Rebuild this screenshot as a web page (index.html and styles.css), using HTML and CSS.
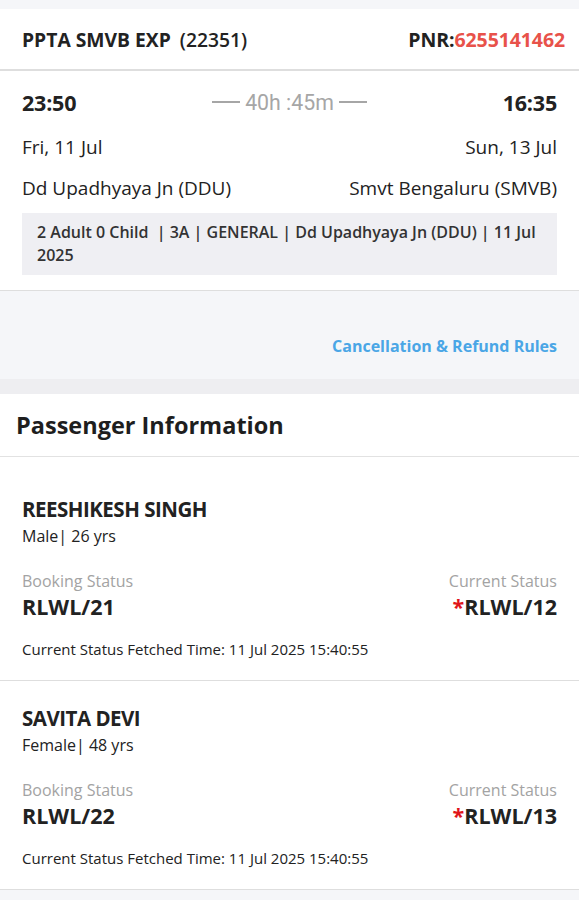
FILE: index.html
```html
<!DOCTYPE html>
<html>
<head>
<meta charset="utf-8">
<link rel="stylesheet" href="styles.css">
</head>
<body>
<div class="page">
  <div class="top-band"></div>
  <header class="train-head">
    <div class="train-name">PPTA SMVB EXP <span class="train-no">(22351)</span></div>
    <div class="pnr">PNR:<span class="pnr-no">6255141462</span></div>
  </header>
  <section class="journey">
    <div class="row times">
      <span class="time">23:50</span>
      <span class="duration"><span class="dash"></span>40h :45m<span class="dash"></span></span>
      <span class="time">16:35</span>
    </div>
    <div class="row dates">
      <span>Fri, 11 Jul</span>
      <span>Sun, 13 Jul</span>
    </div>
    <div class="row stations">
      <span>Dd Upadhyaya Jn (DDU)</span>
      <span>Smvt Bengaluru (SMVB)</span>
    </div>
    <div class="summary">2 Adult 0 Child &nbsp;| 3A | GENERAL | Dd Upadhyaya Jn (DDU) | 11 Jul 2025</div>
  </section>
  <section class="rules">
    <a class="rules-link">Cancellation &amp; Refund Rules</a>
  </section>
  <div class="gap-band"></div>
  <section class="passengers">
    <h2 class="pass-title">Passenger Information</h2>
    <div class="pass">
      <div class="pass-name">REESHIKESH SINGH</div>
      <div class="pass-meta">Male| 26 yrs</div>
      <div class="status-row">
        <div class="status">
          <div class="status-label">Booking Status</div>
          <div class="status-val">RLWL/21</div>
        </div>
        <div class="status right">
          <div class="status-label">Current Status</div>
          <div class="status-val"><span class="star">*</span>RLWL/12</div>
        </div>
      </div>
      <div class="fetched">Current Status Fetched Time: 11 Jul 2025 15:40:55</div>
    </div>
    <div class="pass">
      <div class="pass-name">SAVITA DEVI</div>
      <div class="pass-meta">Female| 48 yrs</div>
      <div class="status-row">
        <div class="status">
          <div class="status-label">Booking Status</div>
          <div class="status-val">RLWL/22</div>
        </div>
        <div class="status right">
          <div class="status-label">Current Status</div>
          <div class="status-val"><span class="star">*</span>RLWL/13</div>
        </div>
      </div>
      <div class="fetched">Current Status Fetched Time: 11 Jul 2025 15:40:55</div>
    </div>
  </section>
</div>
</body>
</html>
```
FILE: styles.css
```css
* { box-sizing: border-box; margin: 0; padding: 0; }
html, body { background: #f5f6f9; }
body {
  font-family: "Open Sans", "Noto Sans", sans-serif;
  color: #222;
  width: 579px;
  height: 900px;
  overflow: hidden;
}
.page { display: flex; flex-direction: column; }
.top-band { height: 9px; background: #f5f6f9; }
.train-head {
  height: 62px;
  background: #fff;
  display: flex;
  justify-content: space-between;
  align-items: center;
  padding: 0 14px 0 22px;
  border-bottom: 2px solid #dedede;
  font-size: 19.3px;
  font-weight: 700;
}
.train-no { font-weight: 600; margin-left: 4px; }
.pnr { font-size: 19.5px; letter-spacing: -0.1px; }
.pnr-no { color: #e8524a; }
.journey {
  background: #fff;
  padding: 16px 22px 15px 22px;
  border-bottom: 1px solid #dedede;
}
.row { display: flex; justify-content: space-between; align-items: center; }
.times { height: 30px; }
.time { font-size: 21.5px; font-weight: 700; letter-spacing: -0.2px; }
.duration {
  display: flex;
  align-items: center;
  gap: 5px;
  font-family: Roboto, "Liberation Sans", sans-serif;
  font-size: 21.3px;
  color: #a6a6a6;
  font-weight: 400;
}
.dash { display: block; width: 28px; height: 1.5px; background: #a6a6a6; }
.dates { font-size: 19px; margin-top: 15px; height: 30px; }
.stations { font-size: 19px; margin-top: 11px; height: 30px; }
.summary {
  margin-top: 10px;
  background: #efeff3;
  padding: 8px 15px 8px 15px;
  font-size: 16px;
  font-weight: 600;
  line-height: 23px;
  color: #333;
}
.rules {
  height: 88px;
  background: #f5f6f9;
  display: flex;
  justify-content: flex-end;
  align-items: flex-end;
  padding: 0 22px 22px;
}
.rules-link { color: #4aa6e6; font-weight: 700; font-size: 16px; }
.gap-band { height: 15px; background: #eeeef1; }
.passengers { background: #fff; }
.pass-title {
  font-size: 23.5px;
  font-weight: 700;
  color: #1e1e1e;
  padding: 0 16px;
  height: 63px;
  display: flex;
  align-items: center;
  border-bottom: 1px solid #e2e2e2;
}
.pass {
  padding: 37px 22px 21px;
  border-bottom: 1px solid #dedede;
}
.pass + .pass { padding-top: 22px; }
.pass-name { font-size: 20.5px; font-weight: 700; line-height: 30px; color: #222; letter-spacing: -0.5px; }
.pass-meta { font-size: 16px; line-height: 24px; color: #222; }
.status-row { display: flex; justify-content: space-between; margin-top: 22px; }
.status.right { text-align: right; }
.status-label { font-size: 16px; color: #a3a3a3; line-height: 22px; }
.status-val { font-size: 21.5px; font-weight: 700; line-height: 30px; color: #222; }
.star { color: #e0141b; }
.fetched { font-size: 15px; line-height: 20px; margin-top: 17px; color: #222; }
```
